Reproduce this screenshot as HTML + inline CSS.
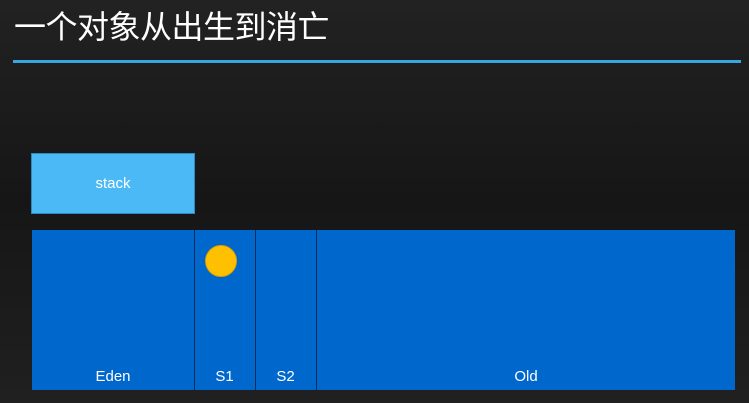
<!DOCTYPE html><html><head><style>
body{margin:0;width:749px;height:403px;position:relative;overflow:hidden;font-family:"Liberation Sans","Noto Sans CJK SC",sans-serif;background:linear-gradient(180deg,#222 0%,#161616 50%,#202020 100%)}
.t{position:absolute;left:14px;top:2px;color:#fff;font-size:32px;letter-spacing:-0.5px}
.line{position:absolute;left:13px;top:60px;width:728px;height:3px;background:#3aa6e0}
.stack{position:absolute;left:31px;top:153px;width:162px;height:59px;background:#4bb9f6;border:1px solid #2c8ac0;color:#fff;font-size:15px;text-align:center;line-height:59px}
.heap{position:absolute;top:230px;height:160px;background:#0067cc;color:#fff;font-size:15px;text-align:center}
.heap span{position:absolute;bottom:5px;left:0;right:0}
.d{position:absolute;top:230px;height:160px;width:1px;background:#0d2a55}
.c{position:absolute;left:205px;top:245px;width:32px;height:32px;border-radius:50%;background:#ffc000;border:1px solid #d9a000;box-sizing:border-box}
</style></head><body>
<div class="t">一个对象从出生到消亡</div>
<div class="line"></div>
<div class="stack">stack</div>
<div class="heap" style="left:32px;width:703px"></div>
<div class="heap" style="left:32px;width:162px"><span>Eden</span></div>
<div class="heap" style="left:195px;width:59px"><span>S1</span></div>
<div class="heap" style="left:256px;width:59px"><span>S2</span></div>
<div class="heap" style="left:317px;width:418px"><span>Old</span></div>
<div class="d" style="left:194px"></div><div class="d" style="left:255px"></div><div class="d" style="left:316px"></div>
<div class="c"></div>
</body></html>
